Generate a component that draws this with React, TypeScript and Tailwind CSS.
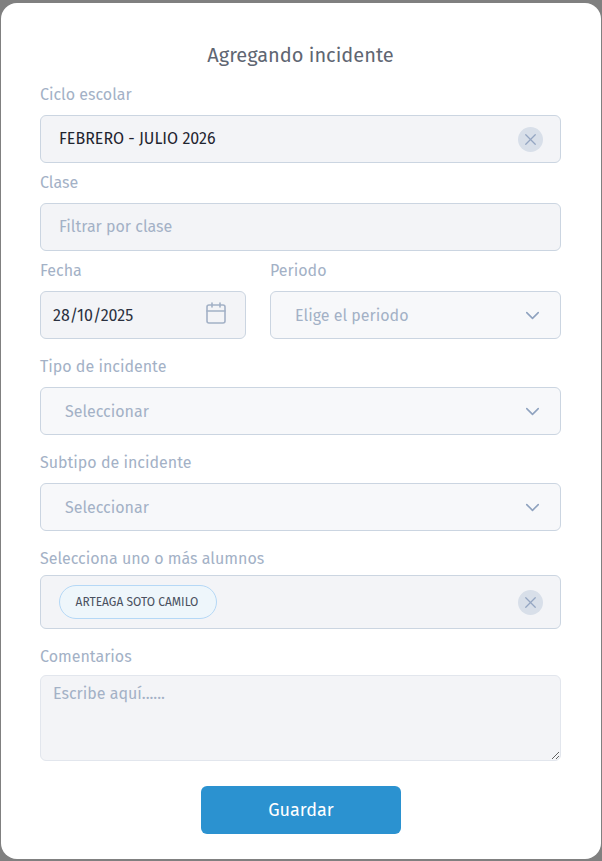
import type { ReactNode } from 'react';
import { Calendar, ChevronDown, X } from 'lucide-react';

const font = { fontFamily: '"Fira Sans", "Noto Sans", sans-serif' };

function Label({ children, className }: { children: ReactNode; className: string }) {
  return <label className={`block h-6 text-base leading-6 text-[#a3b1c6] ${className}`}>{children}</label>;
}

function ClearButton() {
  return (
    <span className="flex h-[25px] w-[25px] items-center justify-center rounded-full bg-[#d8dfe9] text-[#94a6c2]">
      <X size={19} strokeWidth={1.6} />
    </span>
  );
}

function SelectBox({ placeholder }: { placeholder: string }) {
  return (
    <div className="flex h-12 items-center justify-between rounded-md border border-[#cbd5e1] bg-[#f7f8fa] pr-4 pl-6 text-base text-[#a3b1c6]">
      <span className="pt-0.5">{placeholder}</span>
      <ChevronDown size={23} strokeWidth={1.6} className="text-[#8fa2bf]" />
    </div>
  );
}

export default function App() {
  return (
    <div className="h-[861px] w-[602px] overflow-hidden bg-[#808080] pt-[3px] pr-px pb-0.5 pl-px" style={font}>
      <div className="h-[856px] rounded-2xl bg-white pt-10 pr-10 pl-[39px]">
        <h2 className="h-6 text-center text-xl leading-6 text-[#5f6672]">Agregando incidente</h2>

        <Label className="mt-4 mb-2">Ciclo escolar</Label>
        <div className="flex h-12 items-center justify-between rounded-md border border-[#cbd5e1] bg-[#f3f4f7] pr-[17px] pl-[18px] text-base text-[#1f2430]">
          <span>FEBRERO - JULIO 2026</span>
          <ClearButton />
        </div>

        <Label className="mt-2 mb-2">Clase</Label>
        <input
          placeholder="Filtrar por clase"
          className="block h-12 w-full rounded-md border border-[#cbd5e1] bg-[#f3f4f7] px-[18px] pb-0.5 text-base outline-none placeholder:text-[#a3b1c6]"
        />

        <div className="mt-2 flex gap-6">
          <div className="w-[206px]">
            <Label className="mb-2">Fecha</Label>
            <div className="flex h-12 items-center justify-between rounded-md border border-[#cbd5e1] bg-[#f3f4f7] pr-[17px] pl-3 text-base text-[#2b3140]">
              <span className="pt-0.5">28/10/2025</span>
              <Calendar size={24} strokeWidth={1.6} className="mb-1 text-[#a3b1c6]" />
            </div>
          </div>
          <div className="flex-1">
            <Label className="mb-2">Periodo</Label>
            <SelectBox placeholder="Elige el periodo" />
          </div>
        </div>

        <Label className="mt-4 mb-2">Tipo de incidente</Label>
        <SelectBox placeholder="Seleccionar" />

        <Label className="mt-4 mb-2">Subtipo de incidente</Label>
        <SelectBox placeholder="Seleccionar" />

        <Label className="mt-4 mb-1">Selecciona uno o más alumnos</Label>
        <div className="flex h-[54px] items-center justify-between rounded-md border border-[#cbd5e1] bg-[#f3f4f7] pr-[17px] pl-[18px]">
          <span className="flex h-[34px] w-[158px] items-center justify-center rounded-full border border-[#b5d8f6] bg-[#eef6fb] pr-0.5 text-xs text-[#4a5160]">
            ARTEAGA SOTO CAMILO
          </span>
          <ClearButton />
        </div>

        <Label className="mt-4 mb-1.5">Comentarios</Label>
        <textarea
          placeholder="Escribe aquí......"
          className="block h-[86px] w-full rounded-md border border-[#e2e6ed] bg-[#f3f4f7] px-3 py-1.5 text-base outline-none placeholder:text-[#a3b1c6]"
        />

        <button className="mt-[25px] ml-[161px] block h-12 w-[200px] rounded-md bg-[#2b92d0] text-lg text-white">
          Guardar
        </button>
      </div>
    </div>
  );
}
